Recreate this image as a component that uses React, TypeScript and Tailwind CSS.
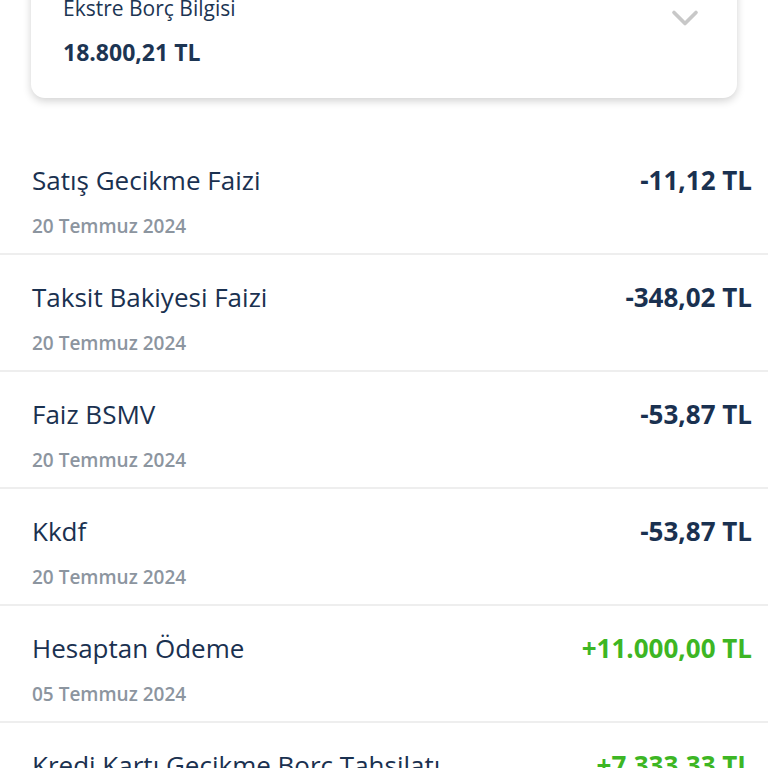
import { ChevronDown } from 'lucide-react';

const items = [
  { title: 'Satış Gecikme Faizi', date: '20 Temmuz 2024', amount: '-11,12 TL', plus: false },
  { title: 'Taksit Bakiyesi Faizi', date: '20 Temmuz 2024', amount: '-348,02 TL', plus: false },
  { title: 'Faiz BSMV', date: '20 Temmuz 2024', amount: '-53,87 TL', plus: false },
  { title: 'Kkdf', date: '20 Temmuz 2024', amount: '-53,87 TL', plus: false },
  { title: 'Hesaptan Ödeme', date: '05 Temmuz 2024', amount: '+11.000,00 TL', plus: true },
  { title: 'Kredi Kartı Gecikme Borç Tahsilatı', date: '05 Temmuz 2024', amount: '+7.333,33 TL', plus: true }
];

export default function App() {
  return (
    <div className="w-[768px] h-[768px] overflow-hidden bg-white font-['Open_Sans',sans-serif]">
      {/* Statement card */}
      <div className="mx-[31px] -mt-[40px] rounded-[14px] bg-white shadow-[0_3px_8px_rgba(0,0,0,0.18)] pl-[32px] pr-[36px] pt-[32px] pb-[32px] flex items-start justify-between">
        <div className="flex flex-col gap-[14px]">
          <span className="text-[21px] leading-[32px] font-medium text-[#1c3553]">Ekstre Borç Bilgisi</span>
          <span className="text-[23px] leading-[28px] font-bold text-[#1c3553]">18.800,21 TL</span>
        </div>
        <ChevronDown className="w-[44px] h-[44px] mt-[4px] -mr-[6px] text-[#c8c8c8]" strokeWidth={2} />
      </div>

      {/* Transactions */}
      <div className="mt-[40px] flex flex-col">
        {items.map((it, i) => (
          <div key={i} className="border-b-2 border-[#eeeeee] pl-[32px] pr-[16px] pt-[26px] pb-[15px] flex items-start justify-between">
            <div className="flex flex-col gap-[18px]">
              <span className="text-[26px] leading-[32px] font-medium text-[#1a3150]">{it.title}</span>
              <span className="text-[19px] leading-[24px] font-semibold text-[#8c959f]">{it.date}</span>
            </div>
            <span className={`text-[26px] leading-[32px] font-bold ${it.plus ? 'text-[#3db624]' : 'text-[#1a3150]'}`}>{it.amount}</span>
          </div>
        ))}
      </div>
    </div>
  );
}
